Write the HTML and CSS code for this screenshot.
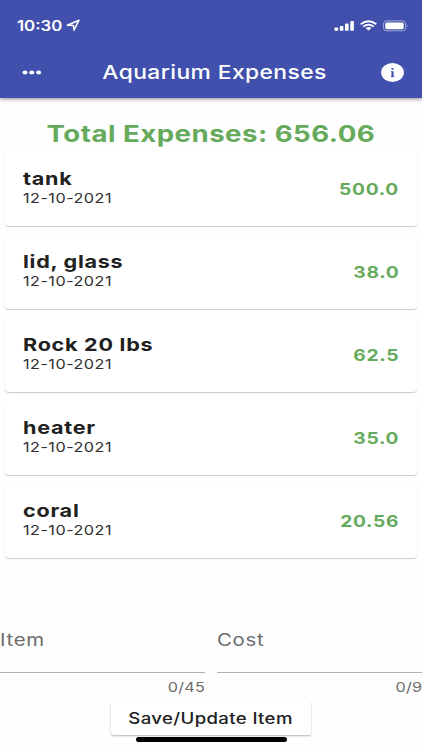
FILE: index.html
```html
<!DOCTYPE html>
<html lang="en">
  <head>
    <meta charset="UTF-8" />
    <title>Aquarium Expenses</title>
    <link rel="stylesheet" href="styles.css">
  </head>
  <body>
    <div class="app">
      <header class="header">
        <!-- status bar -->
        <div class="status">
          <span class="time wide">10:30</span>
          <svg class="arrow" width="15" height="13" viewBox="0 0 15 13">
            <path d="M1.3 6.2 L13 1.2 L8 11.2 L7.4 6.5 Z" fill="none" stroke="#fff" stroke-width="1.5" stroke-linejoin="round" />
          </svg>
          <svg class="system" width="75" height="12" viewBox="0 0 75 12">
            <g fill="#fff">
              <rect x="0.5" y="7.5" width="3.6" height="3.3" rx="0.9" />
              <rect x="5.8" y="5.9" width="3.6" height="4.9" rx="0.9" />
              <rect x="11" y="3.6" width="3.6" height="7.2" rx="0.9" />
              <rect x="16.3" y="1" width="3.6" height="9.8" rx="0.9" />
              <path d="M31.5 7.9 Q34.5 6.1 37.5 7.9 L34.5 10.6 Z" />
              <rect x="51.2" y="2.4" width="18.5" height="6.9" rx="1.7" />
              <path d="M72.6 4.3 Q74.6 5.8 72.6 7.3 Z" opacity="0.55" />
            </g>
            <g fill="none" stroke="#fff">
              <path d="M26.7 4.2 Q34.5 -1.7 42.3 4.2" stroke-width="1.8" />
              <path d="M29.2 6.6 Q34.5 2.6 39.8 6.6" stroke-width="1.7" />
              <rect x="49.5" y="0.9" width="22" height="9.9" rx="3" opacity="0.5" />
            </g>
          </svg>
        </div>
        <div class="toolbar">
          <svg class="more" width="20" height="6" viewBox="0 0 20 6" fill="#fff">
            <ellipse cx="3" cy="2.4" rx="2.5" ry="2" />
            <ellipse cx="9.8" cy="2.4" rx="2.5" ry="2" />
            <ellipse cx="16.6" cy="2.4" rx="2.5" ry="2" />
          </svg>
          <h1 class="title"><span class="wide">Aquarium Expenses</span></h1>
          <svg class="info" width="23" height="19" viewBox="0 0 23 19">
            <ellipse cx="11.5" cy="9.5" rx="11.4" ry="9.4" fill="#fff" />
            <path d="M10.4 4.9h2.2v1.8h-2.2z M9.9 8.2h2.7v4.9h0.6v0.9h-3.3v-0.9h0.6v-4h-0.6z" fill="#4150ad" />
          </svg>
        </div>
      </header>

      <h2 class="total"><span class="wide">Total Expenses: 656.06</span></h2>

      <ul class="list">
        <li class="card">
          <div>
            <div class="name wide">tank</div>
            <div class="date wide">12-10-2021</div>
          </div>
          <div class="cost wide">500.0</div>
        </li>
        <li class="card">
          <div>
            <div class="name wide">lid, glass</div>
            <div class="date wide">12-10-2021</div>
          </div>
          <div class="cost wide">38.0</div>
        </li>
        <li class="card">
          <div>
            <div class="name wide">Rock 20 lbs</div>
            <div class="date wide">12-10-2021</div>
          </div>
          <div class="cost wide">62.5</div>
        </li>
        <li class="card">
          <div>
            <div class="name wide">heater</div>
            <div class="date wide">12-10-2021</div>
          </div>
          <div class="cost wide">35.0</div>
        </li>
        <li class="card">
          <div>
            <div class="name wide">coral</div>
            <div class="date wide">12-10-2021</div>
          </div>
          <div class="cost wide">20.56</div>
        </li>
      </ul>

      <!-- new item form -->
      <div class="form">
        <div class="field">
          <div class="input"><span class="label wide">Item</span></div>
          <div class="counter wide">0/45</div>
        </div>
        <div class="field">
          <div class="input"><span class="label wide">Cost</span></div>
          <div class="counter wide">0/9</div>
        </div>
      </div>
      <button class="save"><span class="wide">Save/Update Item</span></button>
      <div class="home"></div>
    </div>
  </body>
</html>
```

FILE: styles.css
```css
* {
  box-sizing: border-box;
}

body {
  margin: 0;
  background: #fefefe;
  color: #212121;
  font-family: Inter, "Liberation Sans", sans-serif;
}

.app {
  width: 422px;
  height: 750px;
  display: flex;
  flex-direction: column;
  overflow: hidden;
}

/* all labels are set in extended letters */
.wide {
  display: inline-block;
  transform: scaleX(1.2);
  transform-origin: left center;
  white-space: nowrap;
}

.header {
  height: 98px;
  flex: none;
  background: #4150ad;
  color: #fff;
  box-shadow: 0 1px 4px rgba(0, 0, 0, 0.45);
}

.status {
  height: 51px;
  padding: 0 13px 0 17px;
  display: flex;
  align-items: center;
}

.time {
  width: 49px;
  font-size: 14px;
  font-weight: 600;
}

.system {
  margin-left: auto;
}

.toolbar {
  height: 43px;
  padding: 0 18px 0 22px;
  display: flex;
  align-items: center;
  justify-content: space-between;
}

.title {
  margin: 0 0 0 5px;
  font-size: 19px;
  font-weight: 500;
  letter-spacing: 0.35px;
}

.title .wide,
.total .wide,
.save .wide {
  transform-origin: center;
}

.total {
  height: 53px;
  flex: none;
  margin: 0;
  padding-top: 22px;
  font-size: 23px;
  line-height: 28px;
  font-weight: 700;
  letter-spacing: 0.4px;
  text-align: center;
  color: #66aa5c;
}

.list {
  margin: 0;
  padding: 0 5px;
  list-style: none;
  display: flex;
  flex-direction: column;
  gap: 8px;
}

.card {
  height: 75px;
  padding: 0 18px;
  display: flex;
  align-items: center;
  justify-content: space-between;
  background: #fff;
  border-radius: 4px;
  box-shadow: 0 1px 1px rgba(0, 0, 0, 0.2);
}

.name,
.date {
  display: block;
}

.name {
  margin-top: -2px;
  font-size: 18px;
  line-height: 22px;
  font-weight: 700;
  letter-spacing: 0.6px;
}

.date {
  font-size: 13.5px;
  line-height: 17px;
  letter-spacing: 0.4px;
  color: #303030;
}

.cost {
  font-size: 16px;
  font-weight: 700;
  letter-spacing: 0.6px;
  color: #66aa5c;
  transform-origin: right center;
}

.form {
  margin-top: 69px;
  display: grid;
  grid-template-columns: 205px 205px;
  gap: 12px;
}

.field {
  display: flex;
  flex-direction: column;
  color: #6b6b6b;
}

.input {
  height: 46px;
  border-bottom: 1px solid #b0b0b0;
}

.label {
  font-size: 17px;
  line-height: 27px;
  letter-spacing: 0.6px;
}

.counter {
  align-self: flex-end;
  font-size: 13.5px;
  line-height: 28px;
  letter-spacing: 0.2px;
  transform-origin: right center;
}

.save {
  width: 200px;
  height: 34px;
  flex: none;
  align-self: center;
  padding: 0;
  border: 0;
  border-radius: 2px;
  background: #fff;
  color: #212121;
  font: 500 15.5px Inter, "Liberation Sans", sans-serif;
  letter-spacing: 0.3px;
  box-shadow: 0 1px 2px rgba(0, 0, 0, 0.3);
}

.home {
  width: 151px;
  height: 5px;
  margin-top: 2px;
  flex: none;
  align-self: center;
  border-radius: 3px;
  background: #000;
}
```
